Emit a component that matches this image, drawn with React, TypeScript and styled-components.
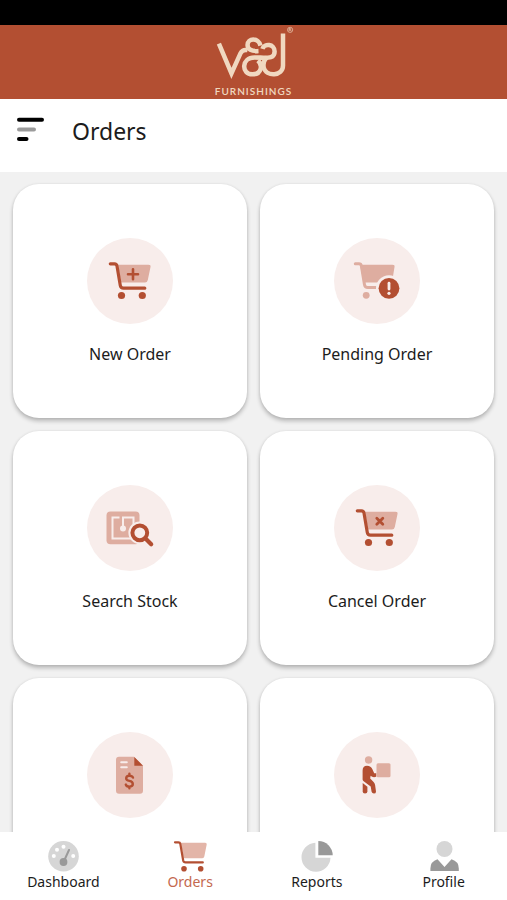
import React from "react";
import styled, { createGlobalStyle } from "styled-components";

const brand = "#b34f32";
const brandSoft = "#deada0";
const cream = "#f0d8c0";
const halo = "#f8edeb";

const GlobalStyle = createGlobalStyle`
  * { box-sizing: border-box; }
  body { margin: 0; font-family: "Noto Sans", "Open Sans", sans-serif; color: #1c1c1c; }
`;

const Screen = styled.div`
  display: flex;
  flex-direction: column;
  height: 100vh;
  background: #f1f1f1;
`;

const StatusBar = styled.div`
  flex: none;
  height: 25px;
  background: #000;
`;

const BrandBar = styled.header`
  flex: none;
  display: flex;
  flex-direction: column;
  align-items: center;
  height: 74px;
  background: ${brand};
`;

const LogoMark = styled.svg`
  display: block;
  width: 84px;
  height: 60px;
`;

const LogoName = styled.span`
  font: 600 10px/16px "Lato", sans-serif;
  letter-spacing: 1px;
  color: ${cream};
`;

const TitleBar = styled.div`
  flex: none;
  display: flex;
  align-items: flex-start;
  gap: 28px;
  height: 73px;
  padding: 16px;
  background: #fff;
`;

const MenuButton = styled.button`
  display: flex;
  padding: 2px 0;
  border: 0;
  background: none;
  cursor: pointer;
`;

const Title = styled.h1`
  margin: 0;
  font-size: 23px;
  line-height: 32px;
  font-weight: 400;
`;

const Content = styled.main`
  flex: 1;
  min-height: 0;
  overflow-y: auto;
  scrollbar-width: none;
  padding: 12px 13px;
`;

const Grid = styled.div`
  display: grid;
  grid-template-columns: 1fr 1fr;
  gap: 13px;
`;

const Card = styled.button`
  display: flex;
  flex-direction: column;
  align-items: center;
  justify-content: center;
  gap: 18px;
  aspect-ratio: 1;
  padding: 2px 0 0;
  border: 0;
  border-radius: 26px;
  background: #fff;
  box-shadow: 0 3px 4px rgba(0, 0, 0, 0.24), 0 0 3px rgba(0, 0, 0, 0.08);
  font: inherit;
  color: inherit;
  cursor: pointer;
`;

const IconDisc = styled.span`
  display: block;
  width: 86px;
  height: 86px;
  border-radius: 50%;
  background: ${halo};
`;

const CardLabel = styled.span`
  min-height: 24px;
  font-size: 16px;
  line-height: 24px;
`;

const BottomNav = styled.nav`
  flex: none;
  display: grid;
  grid-template-columns: repeat(4, 1fr);
  height: 68px;
  padding-top: 8px;
  background: #fff;
`;

const NavItem = styled.a<{ $active?: boolean }>`
  display: flex;
  flex-direction: column;
  align-items: center;
  font-size: 14px;
  line-height: 20px;
  text-decoration: none;
  color: ${(p) => (p.$active ? "#c4694f" : "#1c1c1c")};
`;

const DiscArt = ({ children }: { children: React.ReactNode }) => (
  <svg width="86" height="86" viewBox="0 0 86 86" fill="none" strokeLinecap="round" strokeLinejoin="round" aria-hidden="true">
    {children}
  </svg>
);

const Cart = ({ children }: { children: React.ReactNode }) => (
  <DiscArt>
    <path d="M31 26.7H61.5Q64 26.7 63.5 29L60.8 42Q60.2 44.5 58 44.5H34Z" fill={brandSoft} />
    <path d="M23.3 25.8H27.5Q29.6 25.8 30 28L33.3 47.5Q33.8 50.2 36.5 50.2H57.8" stroke={brand} strokeWidth="3.2" />
    <circle cx="34.5" cy="57.5" r="3.6" fill={brand} />
    <circle cx="55.3" cy="57.5" r="3.6" fill={brand} />
    {children}
  </DiscArt>
);

const NewOrderIcon = () => (
  <Cart>
    <path d="M46 31.2V41.2M41 36.2H51" stroke={brand} strokeWidth="2.6" />
  </Cart>
);

const CancelOrderIcon = () => (
  <Cart>
    <path d="M42.8 33.2L48.8 39.2M48.8 33.2L42.8 39.2" stroke={brand} strokeWidth="2.8" />
  </Cart>
);

const PendingOrderIcon = () => (
  <DiscArt>
    <path d="M26 26.7H58.5Q61 26.7 60.5 29L58 44.5H29.5Z" fill={brandSoft} />
    <path d="M21.3 25.8H25Q27 25.8 27.4 28L30.5 46.8Q31 49.6 33.8 49.6H44" stroke={brandSoft} strokeWidth="3" />
    <circle cx="32.2" cy="57.3" r="3.4" fill={brandSoft} />
    <circle cx="55" cy="50.3" r="13" fill={halo} />
    <circle cx="55" cy="50.3" r="10.4" fill={brand} />
    <path d="M55 45.2V51" stroke={halo} strokeWidth="2.8" />
    <circle cx="55" cy="55.3" r="1.6" fill={halo} />
  </DiscArt>
);

const SearchStockIcon = () => (
  <DiscArt>
    <rect x="19.5" y="26.6" width="33" height="32.6" rx="4" fill={brandSoft} />
    <g stroke={halo} strokeWidth="2" strokeLinecap="butt" strokeLinejoin="miter">
      <path d="M32.5 32.6H25.5V53.4H46.5V32.6H36V43" />
    </g>
    <circle cx="36" cy="43.4" r="3" fill={halo} />
    <path d="M52.5 47.8L64 60" stroke={halo} strokeWidth="7" />
    <circle cx="52.8" cy="47.8" r="11.4" fill={halo} />
    <circle cx="52.8" cy="47.8" r="7.4" stroke={brand} strokeWidth="4" />
    <path d="M59 54L64.2 59.3" stroke={brand} strokeWidth="4.2" />
  </DiscArt>
);

const InvoiceIcon = () => (
  <DiscArt>
    <path d="M32 24.7H47L56 33.7V58.7Q56 61.7 53 61.7H32Q29 61.7 29 58.7V27.7Q29 24.7 32 24.7Z" fill={brandSoft} />
    <path d="M47.3 25L56 33.7H47.3Z" fill={brand} />
    <path d="M34.2 30.3H39.8M34.2 35.2H39.8" stroke={halo} strokeWidth="2" />
    <path d="M46 45.6Q45.2 43.7 42.4 43.7Q39.2 43.7 39.2 46.3Q39.2 48.4 42.4 48.9Q45.8 49.4 45.8 52Q45.8 54.6 42.4 54.6Q39.4 54.6 38.8 52.6M42.4 41.8V43.5M42.4 54.8V56.2" stroke={brand} strokeWidth="2.4" />
  </DiscArt>
);

const DeliveryIcon = () => (
  <DiscArt>
    <circle cx="34.6" cy="28" r="3.7" fill={brandSoft} />
    <rect x="42.5" y="31.3" width="14" height="14" rx="1.5" fill={brandSoft} />
    <path d="M28.6 47.5V38.5Q28.6 33.7 33 33.7Q37 33.7 38.4 37.2L40.2 41.2H42.2V44.8Q38.7 45.8 36.6 43.8L36.2 46.5L39.8 50.2Q40.8 51.3 41.1 53L42 59.4Q42 61.6 39.9 61.6Q38.1 61.6 37.6 59.8L36.7 54.5L30 49.5Q28.6 48.5 28.6 47.5Z" fill={brand} />
    <path d="M28.7 51L33.4 54.8V59.5Q33.4 61.6 31 61.6Q28.7 61.6 28.7 59.5Z" fill={brand} />
  </DiscArt>
);

const NavArt = ({ children, width = 32 }: { children: React.ReactNode; width?: number }) => (
  <svg width={width} height="32" viewBox={`0 0 ${width} 32`} fill="none" strokeLinecap="round" strokeLinejoin="round" aria-hidden="true">
    {children}
  </svg>
);

const DashboardIcon = () => (
  <NavArt>
    <circle cx="16.5" cy="16.3" r="15.3" fill="#d6d6d6" />
    <circle cx="6.8" cy="16" r="2" fill="#fff" />
    <circle cx="10" cy="9.7" r="2" fill="#fff" />
    <circle cx="16.5" cy="6.7" r="2" fill="#fff" />
    <circle cx="26.2" cy="16" r="2" fill="#fff" />
    <path d="M17 21L22 10" stroke="#999" strokeWidth="2" />
    <circle cx="16.5" cy="22" r="3.9" fill="#999" />
  </NavArt>
);

const OrdersIcon = () => (
  <NavArt width={34}>
    <path d="M8 2.8H32.2Q34 2.8 33.7 4.5L31.3 16.5Q31 18.2 29.3 18.2H10.6Z" fill="#e3b5a8" />
    <path d="M2 2.3H5.5Q7 2.3 7.3 3.8L10.2 20.5Q10.6 22.4 12.5 22.4H29.8" stroke={brand} strokeWidth="2.2" />
    <circle cx="11" cy="28.8" r="2.8" fill={brand} />
    <circle cx="27.7" cy="28.8" r="2.8" fill={brand} />
  </NavArt>
);

const ReportsIcon = () => (
  <NavArt>
    <path d="M14.4 2.7V17.8H29.5A14.5 14.5 0 1 1 14.4 2.7Z" fill="#d6d6d6" />
    <path d="M17.3 1A14.4 14.4 0 0 1 31.7 15.3H17.3Z" fill="#999" />
  </NavArt>
);

const ProfileIcon = () => (
  <NavArt>
    <circle cx="16.5" cy="9" r="8" fill="#d6d6d6" />
    <path d="M9.5 19.3L16.5 27L23.5 19.3Q30.8 21.5 30.8 28.5V31H2.4V28.5Q2.4 21.5 9.5 19.3Z" fill="#999" />
  </NavArt>
);

const cards: { name: string; label?: string; Icon: () => React.ReactElement }[] = [
  { name: "New Order", label: "New Order", Icon: NewOrderIcon },
  { name: "Pending Order", label: "Pending Order", Icon: PendingOrderIcon },
  { name: "Search Stock", label: "Search Stock", Icon: SearchStockIcon },
  { name: "Cancel Order", label: "Cancel Order", Icon: CancelOrderIcon },
  { name: "Invoice", Icon: InvoiceIcon },
  { name: "Delivery", Icon: DeliveryIcon },
];

const tabs = [
  { label: "Dashboard", Icon: DashboardIcon },
  { label: "Orders", Icon: OrdersIcon, active: true },
  { label: "Reports", Icon: ReportsIcon },
  { label: "Profile", Icon: ProfileIcon },
];

export default function App() {
  return (
    <Screen>
      <GlobalStyle />
      <StatusBar />
      <BrandBar>
        <LogoMark viewBox="0 0 252 180" fill="none" stroke={cream} strokeWidth="14" role="img" aria-label="V&amp;J">
          <path d="M17 58L56 150L84 88Q90 75 106 78" />
          <path d="M146 64C140 38 106 40 106 62C106 76 118 82 140 81" />
          <path d="M152 74C158 56 190 58 190 82C190 106 168 101 128 101C86 101 86 153 121 153C150 153 154 124 138 110" />
          <path d="M216 26V126C216 160 164 162 156 132Q153 112 166 101" />
          <circle cx="238" cy="15" r="8" strokeWidth="2" />
          <path d="M235 19V11H239Q241 13 239 15H235M239 15L241 19" strokeWidth="2" />
        </LogoMark>
        <LogoName>FURNISHINGS</LogoName>
      </BrandBar>
      <TitleBar>
        <MenuButton aria-label="Open menu">
          <svg width="28" height="26" viewBox="0 0 28 26" strokeWidth="4" strokeLinecap="round" aria-hidden="true">
            <path d="M3 2.8H26" stroke="#000" />
            <path d="M3 12.4H18" stroke="#9b9b9b" />
            <path d="M3 22H10.5" stroke="#000" />
          </svg>
        </MenuButton>
        <Title>Orders</Title>
      </TitleBar>
      <Content>
        <Grid>
          {cards.map(({ name, label, Icon }) => (
            <Card key={name} aria-label={name}>
              <IconDisc>
                <Icon />
              </IconDisc>
              <CardLabel>{label}</CardLabel>
            </Card>
          ))}
        </Grid>
      </Content>
      <BottomNav>
        {tabs.map(({ label, Icon, active }) => (
          <NavItem key={label} href={`#${label.toLowerCase()}`} $active={active} aria-current={active ? "page" : undefined}>
            <Icon />
            {label}
          </NavItem>
        ))}
      </BottomNav>
    </Screen>
  );
}
